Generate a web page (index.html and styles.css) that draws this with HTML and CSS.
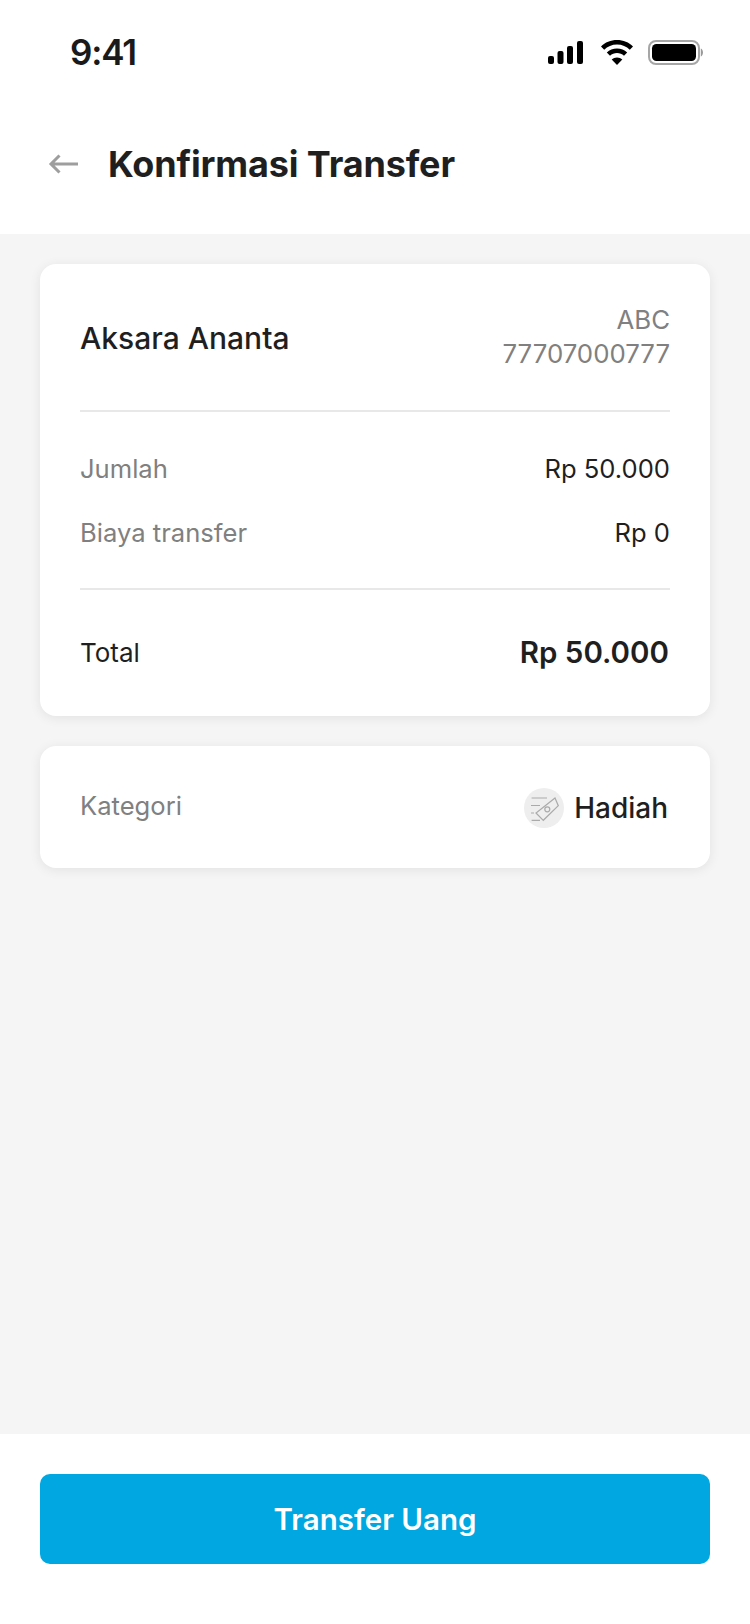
FILE: index.html
```html
<!DOCTYPE html>
<html lang="id">
<head>
<meta charset="utf-8">
<title>Konfirmasi Transfer</title>
<link rel="stylesheet" href="styles.css">
</head>
<body>
<div class="screen">
  <header class="top">
    <div class="status">
      <span class="time">9:41</span>
      <div class="status-icons">
        <svg class="i-signal" width="35" height="23" viewBox="0 0 35 23"><rect x="0" y="15" width="6" height="8" rx="2" fill="#000"/><rect x="9.500" y="10" width="6" height="13" rx="2" fill="#000"/><rect x="19" y="5" width="6" height="18" rx="2" fill="#000"/><rect x="29" y="0" width="6" height="23" rx="2" fill="#000"/></svg>
        <svg class="i-wifi" width="34" height="25" viewBox="0 0 34 25"><path d="M17 4.500c5 0 9.500 2 12.800 5.200L33 6.400C28.900 2.400 23.300 0 17 0S5.100 2.400 1 6.400l3.200 3.300C7.500 6.500 12 4.500 17 4.500z" fill="#000"/><path d="M17 13c2.700 0 5.100 1 7 2.700l3.200-3.300C24.500 9.900 21 8.400 17 8.400s-7.500 1.500-10.200 4l3.200 3.300c1.900-1.700 4.300-2.700 7-2.700z" fill="#000"/><path d="M17 25l5.300-5.500c-1.400-1.200-3.300-2-5.300-2s-3.900.8-5.300 2z" fill="#000"/></svg>
        <svg class="i-batt" width="55" height="25" viewBox="0 0 55 25"><rect x="1" y="1" width="50" height="23" rx="7" fill="none" stroke="#000" stroke-opacity=".35" stroke-width="2"/><rect x="4" y="4" width="44" height="17" rx="4.500" fill="#000"/><path d="M52.800 8.500v8c1.300-.5 2.200-2.200 2.200-4s-.9-3.500-2.200-4z" fill="#000" fill-opacity=".4"/></svg>
      </div>
    </div>
    <div class="nav">
      <svg class="back" width="32" height="24" viewBox="0 0 32 24"><path d="M30 12H3.500M11.500 3.500L3 12l8.500 8.500" fill="none" stroke="#9e9e9e" stroke-width="3"/></svg>
      <h1 class="title">Konfirmasi Transfer</h1>
    </div>
  </header>
  <main class="content">
    <section class="card summary">
      <div class="recipient">
        <span class="name">Aksara Ananta</span>
        <div class="account">ABC<br>77707000777</div>
      </div>
      <div class="amounts">
        <div class="row"><span class="muted">Jumlah</span><span>Rp 50.000</span></div>
        <div class="row"><span class="muted">Biaya transfer</span><span>Rp 0</span></div>
      </div>
      <div class="total">
        <span>Total</span><strong>Rp 50.000</strong>
      </div>
    </section>
    <section class="card category">
      <span class="muted cat-label">Kategori</span>
      <div class="cat-value">
        <span class="cat-icon">
          <svg width="40" height="40" viewBox="0 0 40 40" fill="none" stroke="#aaaaaa" stroke-width="1.200"><path d="M31 10l3.300 7.700-15 14.600L12 25z"/><circle cx="23.300" cy="21.300" r="2.500"/><path d="M7.600 10H23M7 17.500h9M7 25h3M7.600 32.300H16"/></svg>
        </span>
        <span class="cat-name">Hadiah</span>
      </div>
    </section>
  </main>
  <footer class="bottom">
    <button class="cta">Transfer Uang</button>
  </footer>
</div>
</body>
</html>
```
FILE: styles.css
```css
* { box-sizing: border-box; }
html, body { margin: 0; padding: 0; }
body { font-family: Inter, "Liberation Sans", sans-serif; color: #1f1f1f; background: #fff; }
.screen { width: 750px; height: 1624px; display: flex; flex-direction: column; }
.top { height: 234px; background: #fff; flex: none; }
.status { height: 132px; padding: 26px 47px 0 70px; display: flex; justify-content: space-between; align-items: flex-start; }
.time { font-size: 35px; font-weight: 600; line-height: 52px; color: #1a1a1a; letter-spacing: -1.200px; }
.status-icons { display: flex; align-items: center; height: 52px; }
.i-wifi { margin-left: 17px; }
.i-batt { margin-left: 14px; }
.nav { display: flex; align-items: center; padding-left: 48px; gap: 28px; height: 64px; }
.title { margin: 0; font-size: 36px; font-weight: 700; line-height: 44px; color: #1f1f1f; letter-spacing: -0.150px; }
.content { flex: 1; background: #f5f5f5; padding: 30px 40px; display: flex; flex-direction: column; gap: 30px; }
.card { background: #fff; border-radius: 16px; box-shadow: 0 2px 12px rgba(0,0,0,.08); padding: 0 40px; }
.recipient { display: flex; justify-content: space-between; align-items: center; padding: 40px 0; border-bottom: 2px solid #e8e8e8; height: 148px; }
.name { font-size: 30px; font-weight: 500; padding-top: 2px; }
.account { font-size: 25.800px; line-height: 34px; color: #808080; text-align: right; padding-bottom: 1px; }
.amounts { padding: 37px 0 35px; border-bottom: 2px solid #e8e8e8; display: flex; flex-direction: column; gap: 24px; }
.row { display: flex; justify-content: space-between; font-size: 25.600px; line-height: 40px; }
.muted { color: #808080; font-size: 25.600px; }
.total { display: flex; justify-content: space-between; align-items: center; height: 126px; font-size: 26px; padding-bottom: 2px; }
.total strong { font-size: 29.500px; font-weight: 600; padding-right: 1px; }
.category { display: flex; justify-content: space-between; align-items: center; height: 122px; }
.cat-label { padding-bottom: 3px; }
.cat-value { display: flex; align-items: center; gap: 10px; padding: 1px 2px 0 0; }
.cat-icon { width: 40px; height: 40px; border-radius: 50%; background: #eee; display: flex; align-items: center; justify-content: center; }
.cat-name { font-size: 28px; font-weight: 500; }
.bottom { height: 190px; background: #fff; padding: 40px; flex: none; }
.cta { width: 100%; height: 90px; border: 0; border-radius: 10px; background: #00a7e1; color: #fff; font: 600 29.500px Inter, sans-serif; }
```
